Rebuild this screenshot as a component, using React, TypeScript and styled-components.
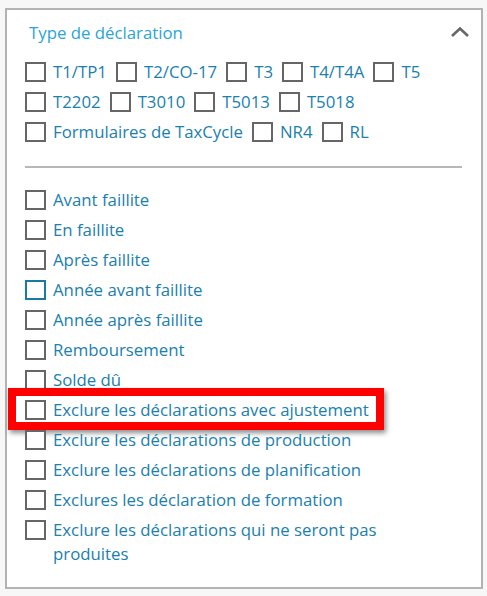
import React from "react";
import styled, { createGlobalStyle } from "styled-components";

const GlobalStyle = createGlobalStyle`
  html, body {
    margin: 0;
    padding: 0;
    background: #f7f7f7;
    font-family: "Open Sans", "Noto Sans", "Liberation Sans", sans-serif;
  }
`;

const Panel = styled.div`
  box-sizing: border-box;
  width: 478px;
  height: 581px;
  margin: 8px 0 0 5px;
  padding: 10px 19px 0 18px;
  background: #ffffff;
  border: 2px solid #b3b3b3;
`;

const Header = styled.div`
  display: flex;
  align-items: center;
  justify-content: space-between;
  height: 24px;
`;

const Title = styled.div`
  padding-left: 4px;
  font-size: 16.8px;
  color: #2aa4d9;
`;

const Chevron = styled.svg`
  width: 20px;
  height: 12px;
  margin-right: -8px;
`;

const TypeGrid = styled.div`
  display: flex;
  flex-wrap: wrap;
  column-gap: 9px;
  margin-top: 13px;
`;

const Option = styled.label<{ $wrap?: boolean }>`
  position: relative;
  display: flex;
  align-items: ${(p) => (p.$wrap ? "flex-start" : "center")};
  gap: 7px;
  min-height: 30px;
  font-size: 16.8px;
  line-height: 24px;
  color: #1a80b0;
  cursor: pointer;
`;

const Box = styled.span<{ $focus?: boolean; $wrap?: boolean }>`
  flex: none;
  box-sizing: border-box;
  width: 21px;
  height: 20px;
  margin-top: ${(p) => (p.$wrap ? "5px" : "0")};
  border: 2.5px solid ${(p) => (p.$focus ? "#1b7aa5" : "#666666")};
  background: #fff;
`;

const Text = styled.span<{ $wrap?: boolean }>`
  ${(p) => (p.$wrap ? "margin-top: 3px; max-width: 360px;" : "")}
`;

const Separator = styled.hr`
  border: none;
  height: 2px;
  background: #b8b8b8;
  margin: 19px 0 17px;
`;

const List = styled.div`
  display: flex;
  flex-direction: column;
`;

const Highlight = styled.span`
  position: absolute;
  left: -17px;
  top: -7px;
  width: 376px;
  height: 42px;
  box-sizing: border-box;
  border: 8px solid #ff0000;
  box-shadow: 2px 3px 5px rgba(0, 0, 0, 0.45);
  pointer-events: none;
`;

const LineBreak = styled.div`
  flex-basis: 100%;
  height: 0;
`;

const types = [
  "T1/TP1",
  "T2/CO-17",
  "T3",
  "T4/T4A",
  "T5",
  "T2202",
  "T3010",
  "T5013",
  "T5018",
  "Formulaires de TaxCycle",
  "NR4",
  "RL",
];

const filters = [
  "Avant faillite",
  "En faillite",
  "Après faillite",
  "Année avant faillite",
  "Année après faillite",
  "Remboursement",
  "Solde dû",
  "Exclure les déclarations avec ajustement",
  "Exclure les déclarations de production",
  "Exclure les déclarations de planification",
  "Exclures les déclaration de formation",
  "Exclure les déclarations qui ne seront pas produites",
];

const rowBreaks = new Set(["T2202", "Formulaires de TaxCycle"]);

const App = () => {
  return (
    <>
      <GlobalStyle />
      <Panel>
        <Header>
          <Title>Type de déclaration</Title>
          <Chevron viewBox="0 0 20 12">
            <path d="M2 10 L10 2.5 L18 10" fill="none" stroke="#666" strokeWidth="2.6" />
          </Chevron>
        </Header>
        <TypeGrid>
          {types.map((t) => (
            <React.Fragment key={t}>
              {rowBreaks.has(t) && <LineBreak />}
              <Option>
                <Box />
                <Text>{t}</Text>
              </Option>
            </React.Fragment>
          ))}
        </TypeGrid>
        <Separator />
        <List>
          {filters.map((f, i) => {
            const wrap = i === filters.length - 1;
            return (
              <Option key={f} $wrap={wrap}>
                <Box $focus={i === 3} $wrap={wrap} />
                <Text $wrap={wrap}>{f}</Text>
                {i === 7 && <Highlight />}
              </Option>
            );
          })}
        </List>
      </Panel>
    </>
  );
};

export default App;
